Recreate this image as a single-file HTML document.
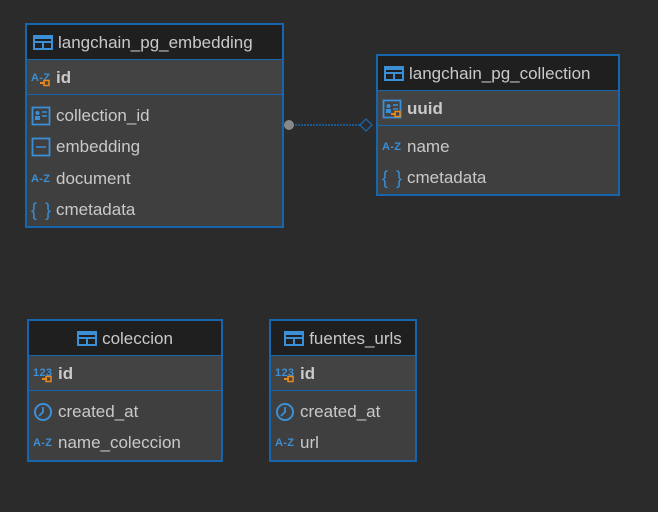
<!DOCTYPE html>
<html><head><style>
body{margin:0;width:658px;height:512px;background:#2b2b2b;position:relative;overflow:hidden;font-family:"Liberation Sans","DejaVu Sans",sans-serif;color:#c9c9c9}
.t{position:absolute;border:2px solid #1766ad;background:#3f3f3f;box-sizing:border-box}
.h{background:#1f1f1f;height:35px;display:flex;align-items:center;font-size:17px;padding-left:6px;border-bottom:1px solid #1766ad;padding-top:2px;box-sizing:border-box}
.h.c{justify-content:center;padding-left:0}
.pk{height:35px;display:flex;align-items:center;font-size:17px;font-weight:bold;padding-left:4px;border-bottom:1px solid #1766ad;background:#434343;padding-top:1px;box-sizing:border-box}
.r{height:31.5px;display:flex;align-items:center;font-size:17px;padding-left:4px}
.pad{height:5px}
.ic{width:20px;height:20px;margin-right:5px;flex:none}
</style></head><body>
<svg width="0" height="0" style="position:absolute"><defs>
<g id="tbl"><rect x="1" y="3" width="18" height="13" fill="none" stroke="#3a8fd6" stroke-width="2"/><line x1="1" y1="9" x2="19" y2="9" stroke="#3a8fd6" stroke-width="2"/><line x1="10" y1="9" x2="10" y2="16" stroke="#3a8fd6" stroke-width="2"/><rect x="1" y="3" width="18" height="3" fill="#3a8fd6"/></g>
<g id="az"><text x="0" y="13" font-size="11" font-weight="bold" fill="#3a8fd6" font-family="Liberation Sans" textLength="19">A-Z</text></g>
<g id="key"><rect x="9" y="14" width="5" height="2" fill="#e8891c"/><rect x="13" y="12.5" width="5" height="5" fill="none" stroke="#e8891c" stroke-width="1.5"/></g>
<g id="card"><rect x="1.5" y="1.5" width="17" height="17" fill="none" stroke="#3a8fd6" stroke-width="1.8"/><circle cx="6.5" cy="7" r="2" fill="#3a8fd6"/><rect x="4" y="10" width="5" height="4" fill="#3a8fd6"/><line x1="11" y1="6" x2="16" y2="6" stroke="#3a8fd6" stroke-width="1.5"/><line x1="11" y1="10" x2="16" y2="10" stroke="#3a8fd6" stroke-width="1.5"/></g>
<g id="emb"><rect x="1.5" y="1.5" width="17" height="17" fill="none" stroke="#3a8fd6" stroke-width="1.8"/><line x1="5" y1="10" x2="15" y2="10" stroke="#3a8fd6" stroke-width="1.5"/></g>
<g id="br"><text x="0" y="16" font-size="18" fill="#3a8fd6" font-family="Liberation Sans" textLength="20">{ }</text></g>
<g id="n123"><text x="0" y="12" font-size="11" font-weight="bold" fill="#3a8fd6" font-family="Liberation Sans" textLength="19">123</text></g>
<g id="clk"><circle cx="10" cy="10" r="8" fill="none" stroke="#3a8fd6" stroke-width="2"/><path d="M10 5 L10 10 L6 14" fill="none" stroke="#3a8fd6" stroke-width="1.8"/></g>
</defs></svg>

<div class="t" style="left:25px;top:23px;width:259px;height:205px">
<div class="h"><svg class="ic"><use href="#tbl"/></svg>langchain_pg_embedding</div>
<div class="pk"><svg class="ic"><use href="#az"/><use href="#key"/></svg>id</div>
<div class="pad"></div>
<div class="r"><svg class="ic"><use href="#card"/></svg>collection_id</div>
<div class="r"><svg class="ic"><use href="#emb"/></svg>embedding</div>
<div class="r"><svg class="ic"><use href="#az"/></svg>document</div>
<div class="r"><svg class="ic"><use href="#br"/></svg>cmetadata</div>
</div>

<div class="t" style="left:376px;top:54px;width:244px;height:142px">
<div class="h"><svg class="ic"><use href="#tbl"/></svg>langchain_pg_collection</div>
<div class="pk"><svg class="ic"><use href="#card"/><use href="#key"/></svg>uuid</div>
<div class="pad"></div>
<div class="r"><svg class="ic"><use href="#az"/></svg>name</div>
<div class="r"><svg class="ic"><use href="#br"/></svg>cmetadata</div>
</div>

<svg style="position:absolute;left:282px;top:115px" width="96" height="20">
<line x1="7" y1="10" x2="84" y2="10" stroke="#1766ad" stroke-width="1.5" stroke-dasharray="2,1"/>
<circle cx="7" cy="10" r="5" fill="#888"/>
<path d="M84 10 L90 4 L96 10 L90 16 Z" fill="#2b2b2b" stroke="#1766ad" stroke-width="1.3" transform="translate(-6,0)"/>
</svg>

<div class="t" style="left:27px;top:319px;width:196px;height:143px">
<div class="h c"><svg class="ic"><use href="#tbl"/></svg>coleccion</div>
<div class="pk"><svg class="ic"><use href="#n123"/><use href="#key"/></svg>id</div>
<div class="pad"></div>
<div class="r"><svg class="ic"><use href="#clk"/></svg>created_at</div>
<div class="r"><svg class="ic"><use href="#az"/></svg>name_coleccion</div>
</div>

<div class="t" style="left:269px;top:319px;width:148px;height:143px">
<div class="h c"><svg class="ic"><use href="#tbl"/></svg>fuentes_urls</div>
<div class="pk"><svg class="ic"><use href="#n123"/><use href="#key"/></svg>id</div>
<div class="pad"></div>
<div class="r"><svg class="ic"><use href="#clk"/></svg>created_at</div>
<div class="r"><svg class="ic"><use href="#az"/></svg>url</div>
</div>
</body></html>
